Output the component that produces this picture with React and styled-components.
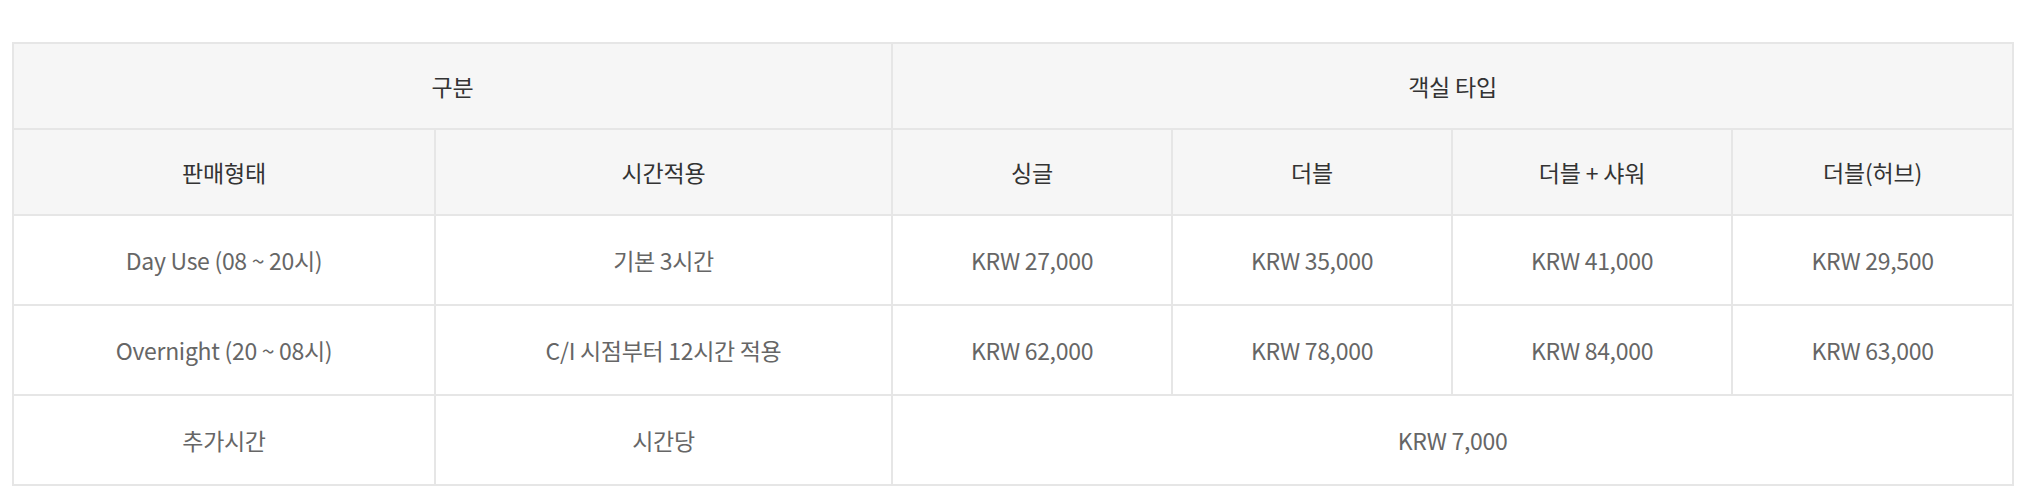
import React from "react";
import styled, { createGlobalStyle } from "styled-components";

const Global = createGlobalStyle`
  html, body { margin: 0; padding: 0; background: #fff; }
  body { font-family: "Noto Sans CJK KR", "Noto Sans", sans-serif; }
`;

const Page = styled.div`
  padding: 42px 12px 0 12px;
`;

const Table = styled.table`
  width: 2000px;
  border-collapse: collapse;
  table-layout: fixed;
  border: 2px solid #e6e6e6;
`;

const HeadCell = styled.th`
  height: 84px;
  padding: 0;
  border: 2px solid #e6e6e6;
  background: #f6f6f6;
  color: #333;
  font-size: 23px;
  font-weight: 400;
  text-align: center;
  vertical-align: middle;
  letter-spacing: -0.2px;
`;

const Cell = styled.td`
  height: 88px;
  padding: 0;
  border: 2px solid #e6e6e6;
  background: #fff;
  color: #666;
  font-size: 23px;
  font-weight: 400;
  text-align: center;
  vertical-align: middle;
  letter-spacing: -0.3px;
`;

const cols = [422, 457, 280, 280, 280, 281];

const rows = [
  ["Day Use (08 ~ 20시)", "기본 3시간", "KRW 27,000", "KRW 35,000", "KRW 41,000", "KRW 29,500"],
  ["Overnight (20 ~ 08시)", "C/I 시점부터 12시간 적용", "KRW 62,000", "KRW 78,000", "KRW 84,000", "KRW 63,000"],
];

export default function App() {
  return (
    <>
      <Global />
      <Page>
        <Table>
          <colgroup>
            {cols.map((w, i) => (
              <col key={i} style={{ width: w }} />
            ))}
          </colgroup>
          <thead>
            <tr>
              <HeadCell colSpan={2}>구분</HeadCell>
              <HeadCell colSpan={4}>객실 타입</HeadCell>
            </tr>
            <tr>
              <HeadCell>판매형태</HeadCell>
              <HeadCell>시간적용</HeadCell>
              <HeadCell>싱글</HeadCell>
              <HeadCell>더블</HeadCell>
              <HeadCell>더블 + 샤워</HeadCell>
              <HeadCell>더블(허브)</HeadCell>
            </tr>
          </thead>
          <tbody>
            {rows.map((r, i) => (
              <tr key={i}>
                {r.map((c, j) => (
                  <Cell key={j}>{c}</Cell>
                ))}
              </tr>
            ))}
            <tr>
              <Cell>추가시간</Cell>
              <Cell>시간당</Cell>
              <Cell colSpan={4}>KRW 7,000</Cell>
            </tr>
          </tbody>
        </Table>
      </Page>
    </>
  );
}
